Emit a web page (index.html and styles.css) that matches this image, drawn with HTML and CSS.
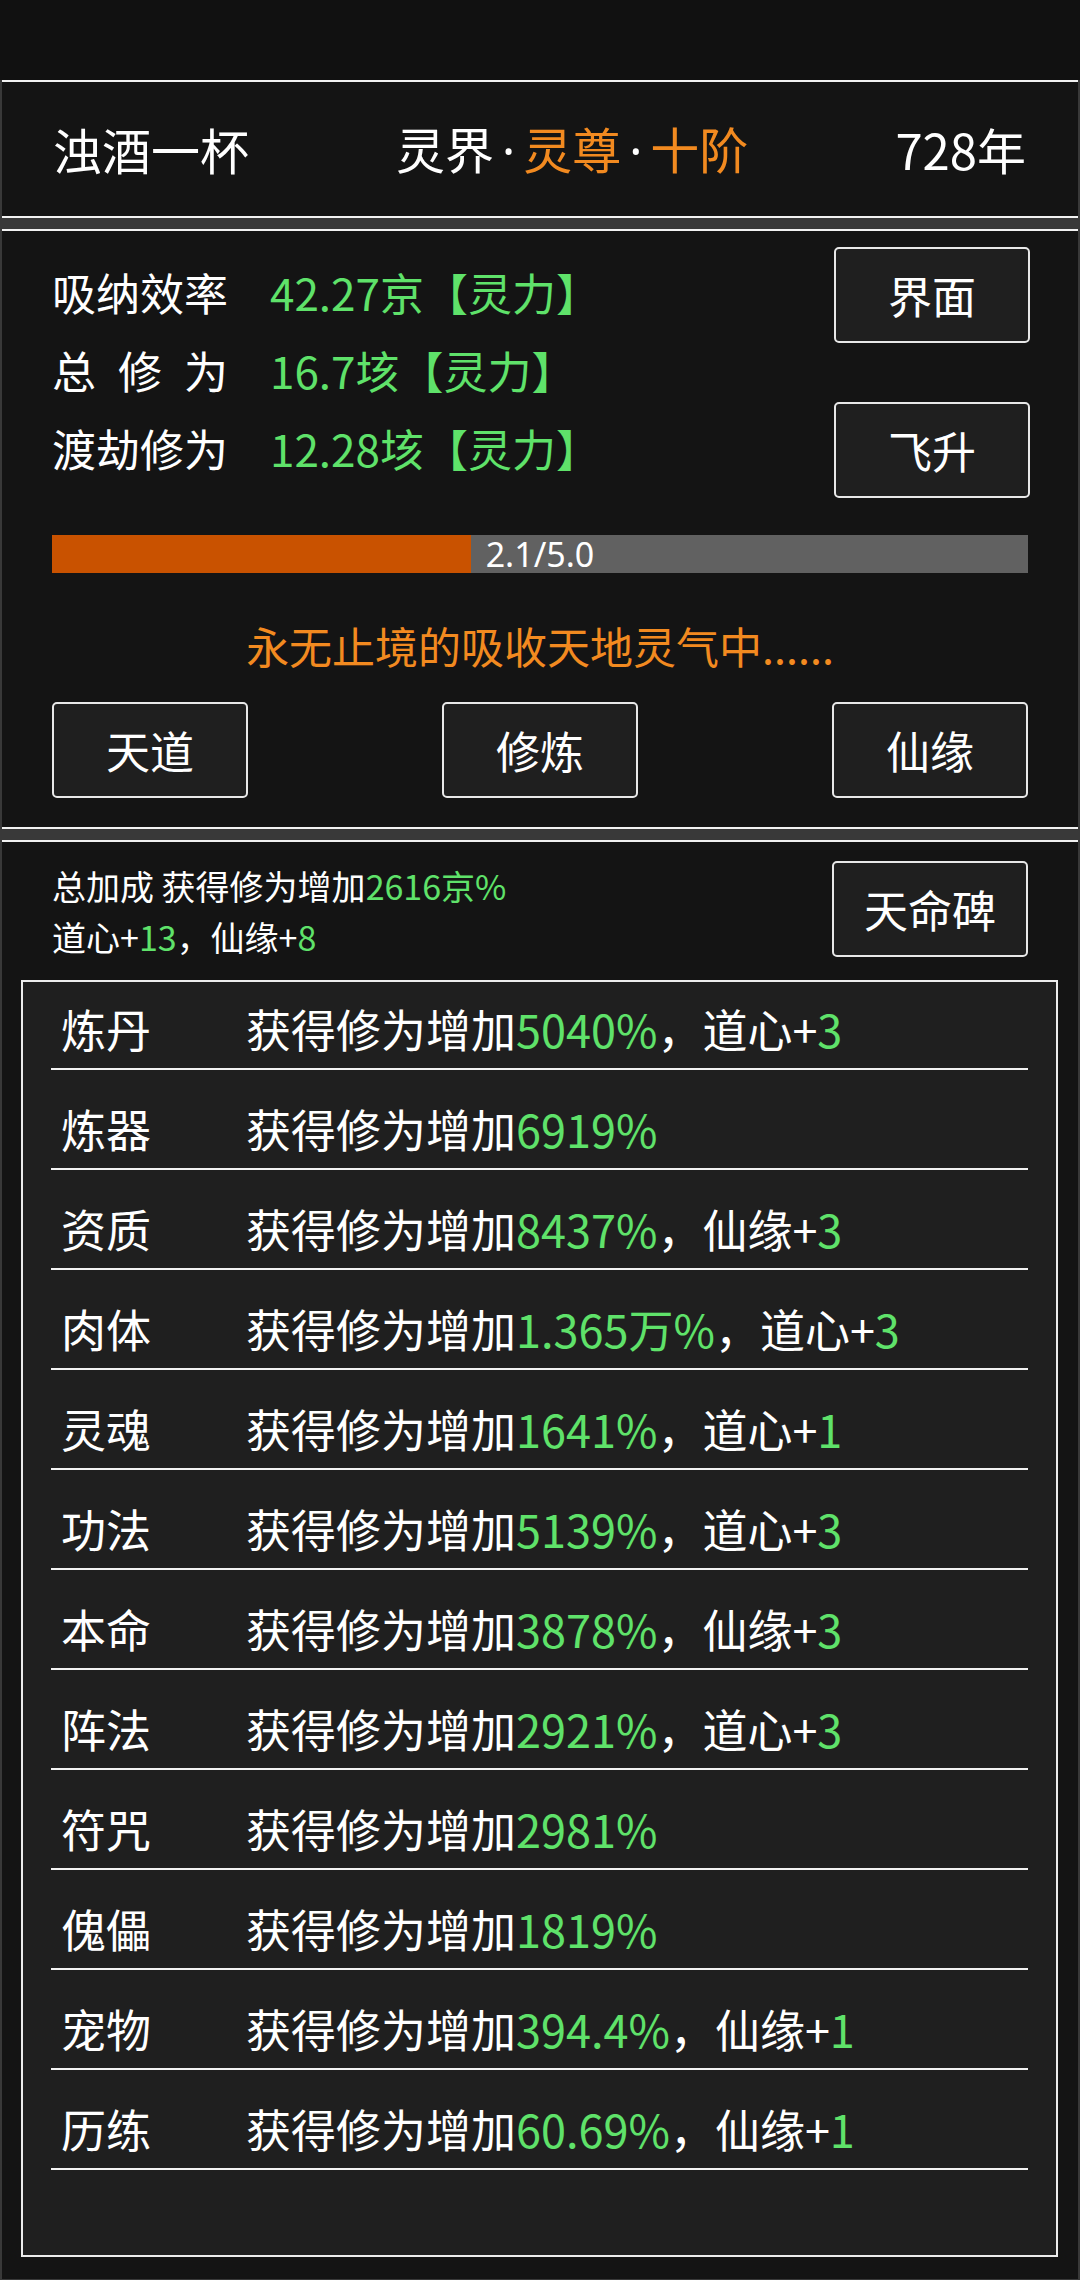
FILE: index.html
```html
<!DOCTYPE html>
<html lang="zh-CN">
<head>
<meta charset="utf-8">
<title>修仙</title>
<link rel="stylesheet" href="styles.css">
</head>
<body>
<div class="statusbar"></div>

<section class="panel head">
  <span class="name">浊酒一杯</span>
  <span class="realm">灵界<span class="dot">·</span><span class="or">灵尊</span><span class="dot">·</span><span class="or">十阶</span></span>
  <span class="age">728年</span>
</section>

<section class="panel main">
  <div class="top">
    <div class="stats">
      <div class="stat"><span class="lbl">吸纳效率</span><span class="val">42.27京【灵力】</span></div>
      <div class="stat"><span class="lbl spread"><span>总</span><span>修</span><span>为</span></span><span class="val">16.7垓【灵力】</span></div>
      <div class="stat"><span class="lbl">渡劫修为</span><span class="val">12.28垓【灵力】</span></div>
    </div>
    <div class="side">
      <div class="btn">界面</div>
      <div class="btn">飞升</div>
    </div>
  </div>
  <div class="bar">
    <div class="fill" style="width:42.9%"></div>
    <span class="bar-text">2.1/5.0</span>
  </div>
  <p class="msg">永无止境的吸收天地灵气中......</p>
  <div class="actions">
    <div class="btn">天道</div>
    <div class="btn">修炼</div>
    <div class="btn">仙缘</div>
  </div>
</section>

<section class="panel bonus">
  <div class="bonus-head">
    <div class="summary">
      <div>总加成 获得修为增加<span class="g">2616京%</span></div>
      <div>道心+<span class="g">13</span>，仙缘+<span class="g">8</span></div>
    </div>
    <div class="btn">天命碑</div>
  </div>
  <div class="list">
    <div class="row"><span class="k">炼丹</span><span class="v">获得修为增加<span class="g">5040%</span>，道心+<span class="g">3</span></span></div>
    <div class="row"><span class="k">炼器</span><span class="v">获得修为增加<span class="g">6919%</span></span></div>
    <div class="row"><span class="k">资质</span><span class="v">获得修为增加<span class="g">8437%</span>，仙缘+<span class="g">3</span></span></div>
    <div class="row"><span class="k">肉体</span><span class="v">获得修为增加<span class="g">1.365万%</span>，道心+<span class="g">3</span></span></div>
    <div class="row"><span class="k">灵魂</span><span class="v">获得修为增加<span class="g">1641%</span>，道心+<span class="g">1</span></span></div>
    <div class="row"><span class="k">功法</span><span class="v">获得修为增加<span class="g">5139%</span>，道心+<span class="g">3</span></span></div>
    <div class="row"><span class="k">本命</span><span class="v">获得修为增加<span class="g">3878%</span>，仙缘+<span class="g">3</span></span></div>
    <div class="row"><span class="k">阵法</span><span class="v">获得修为增加<span class="g">2921%</span>，道心+<span class="g">3</span></span></div>
    <div class="row"><span class="k">符咒</span><span class="v">获得修为增加<span class="g">2981%</span></span></div>
    <div class="row"><span class="k">傀儡</span><span class="v">获得修为增加<span class="g">1819%</span></span></div>
    <div class="row"><span class="k">宠物</span><span class="v">获得修为增加<span class="g">394.4%</span>，仙缘+<span class="g">1</span></span></div>
    <div class="row"><span class="k">历练</span><span class="v">获得修为增加<span class="g">60.69%</span>，仙缘+<span class="g">1</span></span></div>
  </div>
</section>
</body>
</html>
```

FILE: styles.css
```css
* { box-sizing: border-box; }

html, body {
  margin: 0;
  padding: 0;
}

body {
  width: 1080px;
  height: 2280px;
  overflow: hidden;
  background: #393939;
  color: #ffffff;
  font-family: "Noto Sans CJK SC", "Noto Sans", sans-serif;
}

.statusbar {
  height: 80px;
  background: #111111;
}

.panel {
  background: #141414;
  border-top: 2px solid #f2f2f2;
  border-bottom: 2px solid #f2f2f2;
  margin: 0 2px 11px;
}

.g { color: #5fe26a; }
.or { color: #f28a20; }

/* header */
.head {
  height: 138px;
  display: flex;
  align-items: center;
  justify-content: space-between;
  padding: 0 52px 0 51px;
  font-size: 49px;
  line-height: 60px;
}

.dot {
  display: inline-block;
  font-family: "Noto Sans", sans-serif;
  padding: 0 8px;
}

/* buttons */
.btn {
  width: 196px;
  height: 96px;
  display: flex;
  align-items: center;
  justify-content: center;
  background: #1f1f1f;
  border: 2px solid #e8e8e8;
  border-radius: 5px;
  font-size: 44px;
  line-height: 1;
  color: #ffffff;
}

/* main panel */
.main {
  padding: 16px 48px 29px;
}

.top {
  display: flex;
  justify-content: space-between;
  height: 251px;
}

.stats {
  margin-top: 6px;
  display: flex;
  flex-direction: column;
}

.stat {
  display: flex;
  align-items: center;
  height: 78px;
  font-size: 44px;
  line-height: 78px;
}

.lbl {
  width: 176px;
  margin-left: 2px;
  margin-right: 42px;
  white-space: nowrap;
}

.spread {
  display: flex;
  justify-content: space-between;
}

.val { color: #5fe26a; white-space: nowrap; }

.side {
  display: flex;
  flex-direction: column;
  justify-content: space-between;
}

.bar {
  margin: 37px 2px 0;
  height: 38px;
  background: #616161;
  display: grid;
}

.fill {
  grid-area: 1 / 1;
  height: 100%;
  background: #c95200;
}

.bar-text {
  grid-area: 1 / 1;
  justify-self: center;
  align-self: center;
  font-family: "Noto Sans", sans-serif;
  font-size: 34px;
  line-height: 38px;
  color: #ffffff;
}

.msg {
  margin: 42px 0 0;
  height: 60px;
  text-align: center;
  font-size: 43px;
  line-height: 60px;
  color: #f28a20;
}

.actions {
  margin-top: 27px;
  display: flex;
  justify-content: space-between;
  padding: 0 2px;
}

/* bonus panel */
.bonus {
  border-bottom: none;
  margin-bottom: 0;
  padding: 19px 0 22px;
}

.bonus-head {
  display: flex;
  justify-content: space-between;
  align-items: flex-start;
  padding: 0 50px 0 50px;
}

.summary {
  font-size: 34px;
  line-height: 51px;
  margin-top: -1px;
}

.list {
  margin: 18px 20px 0 19px;
  background: #1f1f1f;
  border: 2px solid #ececec;
  padding: 0 28px 85px;
  display: flex;
  flex-direction: column;
  gap: 12px;
}

.row {
  display: flex;
  height: 88px;
  padding-top: 8px;
  border-bottom: 2px solid #f2f2f2;
  font-size: 45px;
  line-height: 78px;
  white-space: nowrap;
}

.k {
  width: 195px;
  padding-left: 10px;
  flex: none;
}
```
